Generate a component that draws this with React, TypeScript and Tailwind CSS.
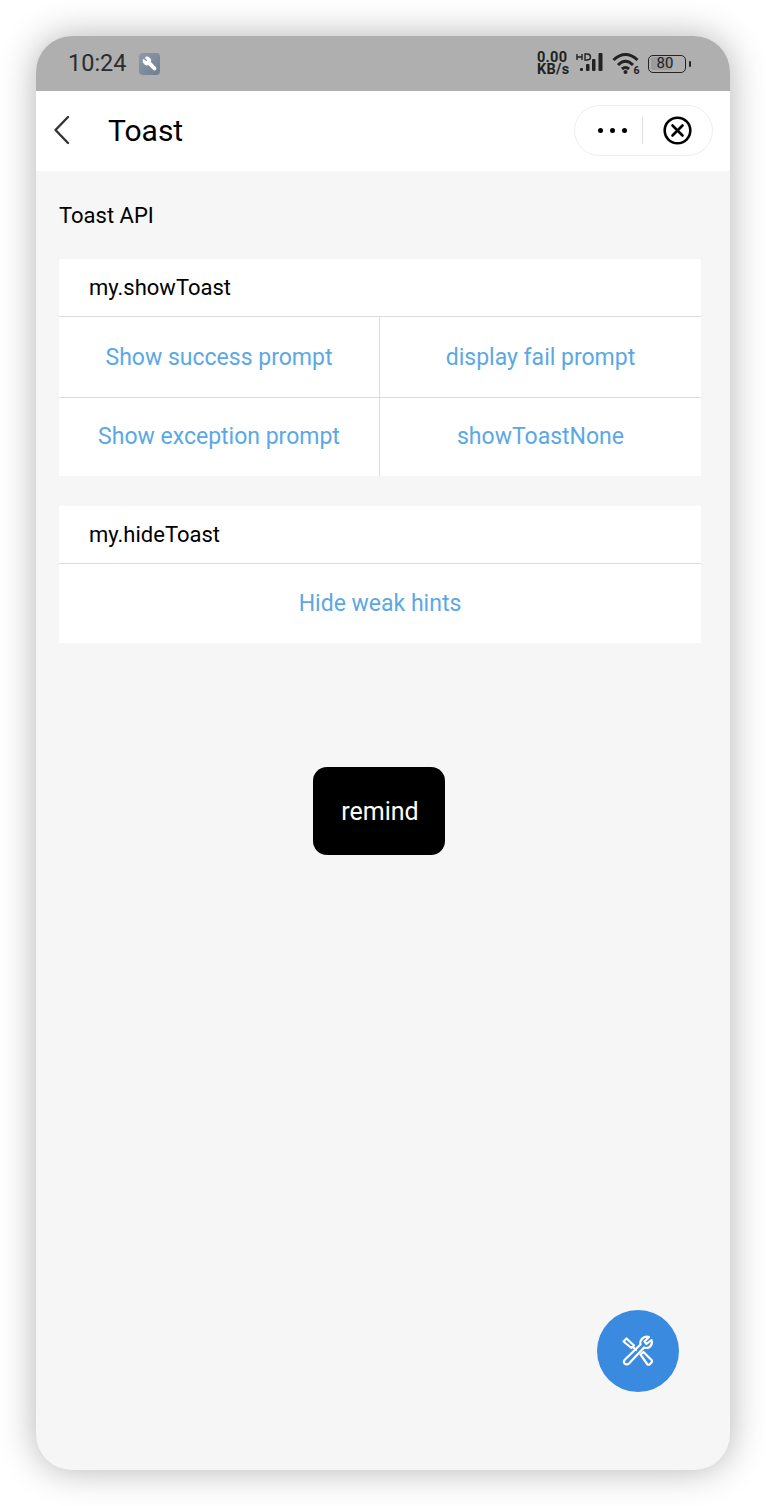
import { Wrench } from "lucide-react";

const sans = "font-['Roboto',sans-serif]";

function Cell({ label, left, right, nudge }: { label: string; left?: boolean; right?: boolean; nudge?: boolean }) {
  return (
    <div
      className={`flex items-center justify-center text-[23px] text-[#5ba8e4] ${left ? "w-[320px]" : "flex-1"} ${
        right ? "border-l border-[#dcdcdc]" : ""
      } ${nudge ? "pt-[2px]" : ""}`}
    >
      {label}
    </div>
  );
}

function StatusIcons() {
  return (
    <div className="flex items-center text-[#222]">
      <div className="ml-[-3px] w-[36px] text-[14.5px] leading-[12px] font-bold tracking-[0.3px]">
        <div>0.00</div>
        <div>KB/s</div>
      </div>
      <svg width="32" height="24" viewBox="0 0 32 24" className="ml-[3px]">
        <path d="M1 2v6M1 5h5M6 2v6" stroke="#222" strokeWidth="1.4" fill="none" />
        <path d="M9 2v6h2.5q3-.2 3-3t-3-3Z" stroke="#222" strokeWidth="1.4" fill="none" />
        <rect x="4" y="16" width="3" height="3" rx="1" fill="#222" />
        <rect x="10" y="12" width="3.5" height="7" rx="1" fill="#222" />
        <rect x="16" y="7" width="3.5" height="12" rx="1" fill="#222" />
        <rect x="22.5" y="1" width="4" height="18" rx="1" fill="#222" />
      </svg>
      <svg width="30" height="26" viewBox="0 0 30 26" className="mt-[2px] ml-[4px]" fill="none" stroke="#222" strokeWidth="3">
        <path d="M1.5 8 Q13.5 -3 25.5 8" />
        <path d="M6 13 Q13.5 5.5 21 13" />
        <path d="M10 17 Q13.5 14 17 17" />
        <circle cx="13.5" cy="20" r="2" fill="#222" stroke="none" />
        <text x="21.5" y="22" fontSize="10.5" fontWeight="700" fill="#222" stroke="none" fontFamily="Roboto, sans-serif">
          6
        </text>
      </svg>
      <div className="ml-[6px] flex h-[18px] w-[38px] items-center rounded-[5px] border-[1.5px] border-[#222] p-[1.5px]">
        <div className="flex h-full w-[21px] items-center justify-center rounded-[2px] bg-[#9c9c9c] text-[15px] leading-none">
          <span className="ml-[8px]">80</span>
        </div>
      </div>
      <div className="ml-[3px] h-[6px] w-[2px] rounded-sm bg-[#222]" />
    </div>
  );
}

export default function App() {
  return (
    <div className={`h-[1506px] w-[766px] overflow-hidden bg-white pt-[36px] pl-[36px] ${sans}`}>
      <div className="relative flex h-[1434px] w-[694px] flex-col overflow-visible rounded-[36px] bg-[#f6f6f6] shadow-[0_0_36px_rgba(0,0,0,0.3)]">
        {/* status bar */}
        <div className="flex h-[55px] items-center justify-between rounded-t-[36px] bg-[#afafaf] pr-[39px] pl-[32px]">
          <div className="flex items-center">
            <span className="text-[23.5px] text-[#2c2c2c]">10:24</span>
            <div className="ml-[12px] flex h-[22px] w-[21px] items-center justify-center rounded-[4px] bg-gradient-to-br from-[#8d9aaa] to-[#6f7f90]">
              <Wrench size={15} color="#fff" fill="#fff" className="rotate-[-90deg]" />
            </div>
          </div>
          <StatusIcons />
        </div>

        {/* nav bar */}
        <div className="flex h-[80px] items-center justify-between bg-white pr-[17px] pl-[17px]">
          <div className="flex items-center pb-[2px]">
            <svg width="18" height="30" viewBox="0 0 18 30" fill="none" stroke="#333" strokeWidth="2.4" strokeLinecap="round" strokeLinejoin="round">
              <path d="M15 2 L2.5 15 L15 28" />
            </svg>
            <span className="ml-[37px] text-[30px] text-black">Toast</span>
          </div>
          <div className="mb-[1px] flex h-[51px] w-[139px] items-center rounded-full border border-[#eeeeee] bg-white">
            <div className="flex flex-1 items-center justify-center gap-[7px] pl-[8px]">
              <span className="h-[5px] w-[5px] rounded-full bg-black" />
              <span className="h-[5px] w-[5px] rounded-full bg-black" />
              <span className="h-[5px] w-[5px] rounded-full bg-black" />
            </div>
            <div className="h-[27px] w-px bg-[#dddddd]" />
            <div className="flex w-[69px] items-center justify-center">
              <svg width="29" height="29" viewBox="0 0 29 29" fill="none" stroke="#000" strokeWidth="2.6" strokeLinecap="round">
                <circle cx="14.5" cy="14.5" r="12.8" />
                <path d="M9.5 9.5 L19.5 19.5 M19.5 9.5 L9.5 19.5" />
              </svg>
            </div>
          </div>
        </div>

        {/* content */}
        <div className="flex flex-col pr-[29px] pl-[23px]">
          <div className="mt-[31px] text-[22px] leading-[28px] text-black">Toast API</div>

          <div className="mt-[29px] bg-white">
            <div className="flex h-[58px] items-center border-b border-[#dcdcdc] pl-[30px] text-[22px] text-black">
              my.showToast
            </div>
            <div className="flex h-[81px] border-b border-[#dcdcdc]">
              <Cell label="Show success prompt" left nudge />
              <Cell label="display fail prompt" right nudge />
            </div>
            <div className="flex h-[78px]">
              <Cell label="Show exception prompt" left />
              <Cell label="showToastNone" right />
            </div>
          </div>

          <div className="mt-[30px] bg-white">
            <div className="flex h-[58px] items-center border-b border-[#dcdcdc] pl-[30px] text-[22px] text-black">
              my.hideToast
            </div>
            <div className="flex h-[79px]">
              <Cell label="Hide weak hints" nudge />
            </div>
          </div>
        </div>

        {/* toast */}
        <div className="absolute top-[731px] left-[277px] flex h-[88px] w-[132px] items-center justify-center rounded-[14px] bg-black pt-[2px] pl-[2px] text-[25px] text-white">
          remind
        </div>

        {/* floating tools button */}
        <div className="absolute top-[1274px] left-[561px] flex h-[82px] w-[82px] items-center justify-center rounded-full bg-[#3a8ae0]">
          <svg width="34" height="34" viewBox="0 0 34 34" fill="none" stroke="#fff" strokeWidth="2.2" strokeLinecap="round" strokeLinejoin="round">
            <path d="M2.5 7.5 L5.5 4.5 L13 11.5 L10.5 14 Z" />
            <path d="M12 13 L15 16" />
            <path d="M19.5 20.5 L22.5 18 L31 26.5 Q31.5 27.5 30.5 28.5 L28.5 30.5 Q27.5 31 26.5 30.5 Z" />
            <path d="M28 3 L23.5 7.5 L25.5 10 L30.5 6 C32 10.5 28.5 15.5 23 13.5 L8 29.5 C6.5 31 4 30.5 3.5 29.5 C2.5 28 3 26.5 4 25.5 L19.5 10.5 C18.5 5.5 23 1.5 28 3 Z" />
          </svg>
        </div>
      </div>
    </div>
  );
}
